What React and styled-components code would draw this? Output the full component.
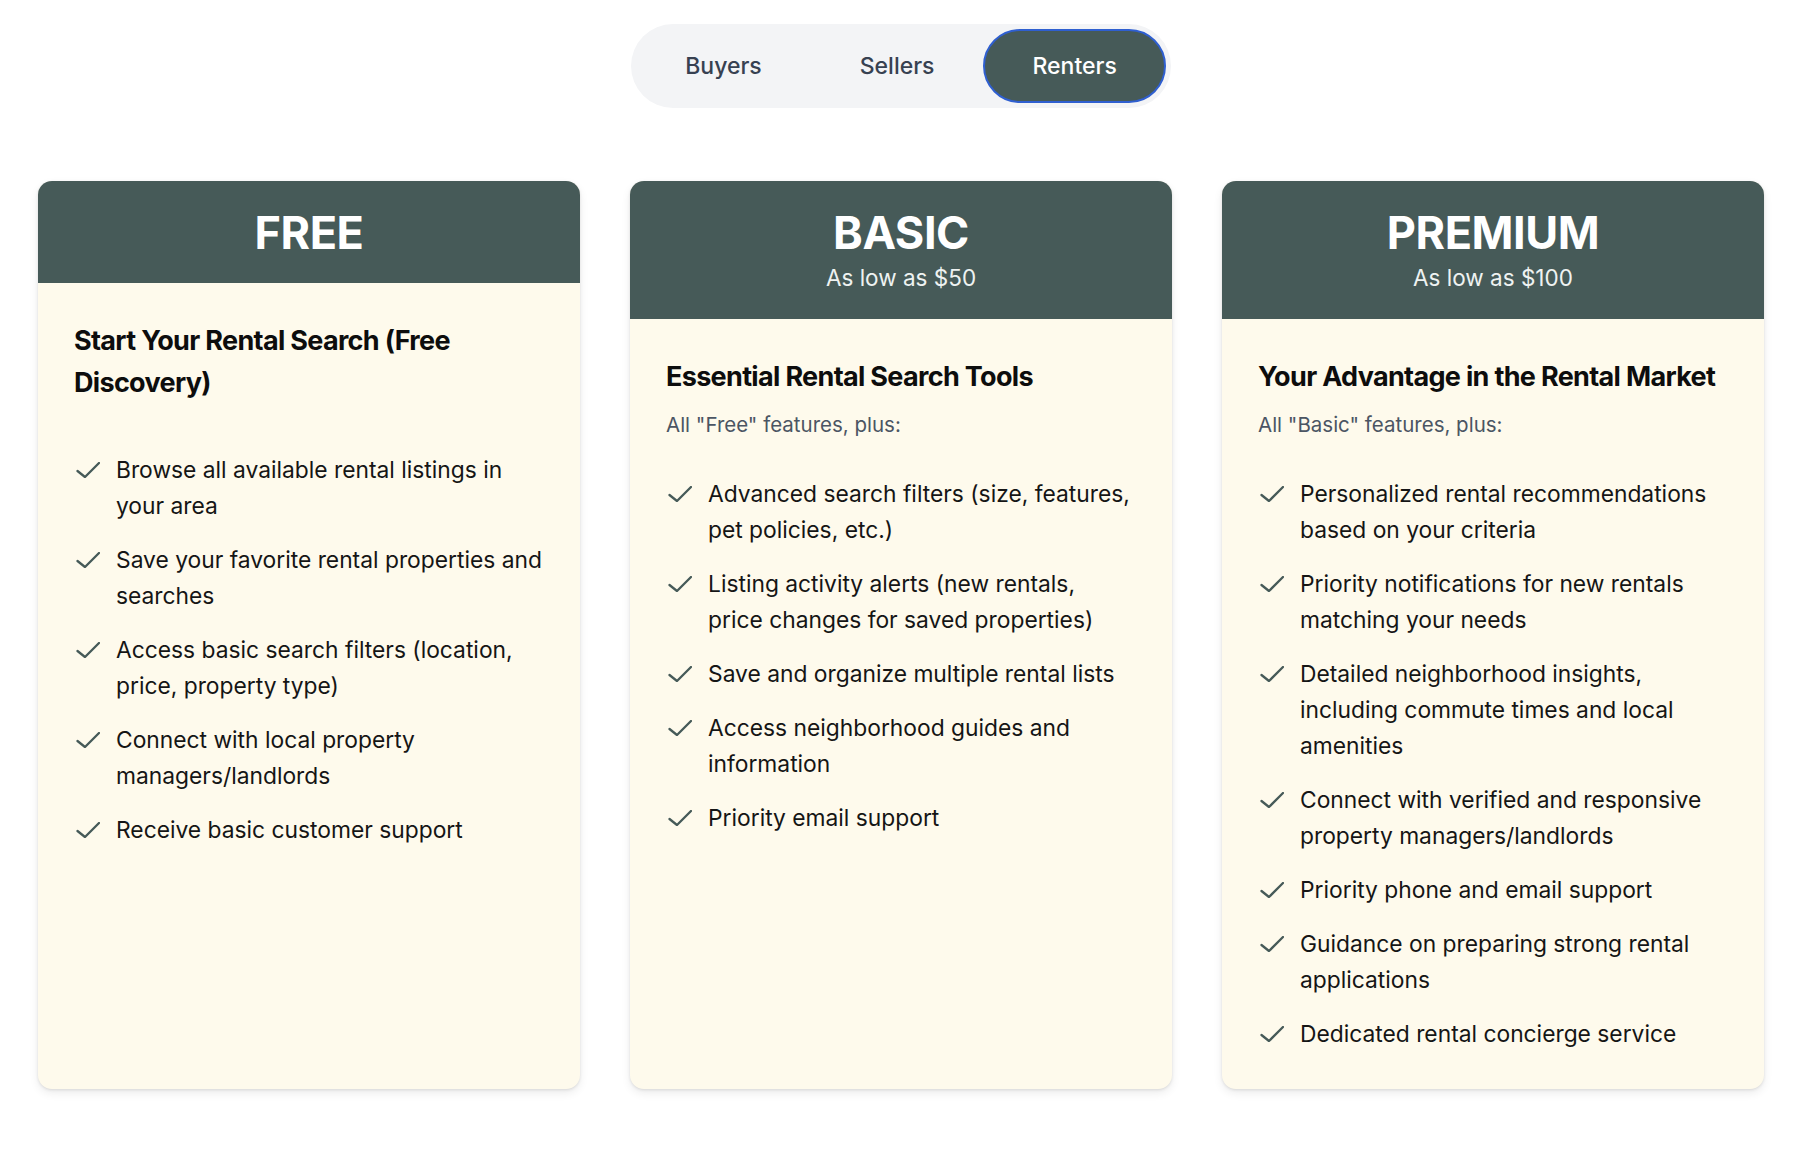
import React from 'react';
import styled, { createGlobalStyle } from 'styled-components';

const GlobalStyle = createGlobalStyle`
  body {
    margin: 0;
    background: #ffffff;
    font-family: Inter, "Noto Sans", sans-serif;
    color: #111111;
  }
`;

const Page = styled.div`
  padding: 24px 56px 60px 38px;
  display: flex;
  flex-direction: column;
  align-items: center;
`;

const Toggle = styled.div`
  display: flex;
  padding: 5px;
  background: #f3f4f6;
  border-radius: 999px;
`;

const ToggleButton = styled.button`
  height: 74px;
  padding: 0 47px;
  border-radius: 999px;
  border: 2px solid ${(p) => (p.$active ? '#2f5fd0' : 'transparent')};
  background: ${(p) => (p.$active ? '#465a58' : 'transparent')};
  color: ${(p) => (p.$active ? '#ffffff' : '#374151')};
  font-family: Inter, sans-serif;
  font-size: 23px;
  font-weight: 500;
  cursor: pointer;
`;

const Grid = styled.div`
  margin-top: 73px;
  display: grid;
  grid-template-columns: repeat(3, 542px);
  gap: 50px;
`;

const Card = styled.div`
  display: flex;
  flex-direction: column;
  border-radius: 14px;
  overflow: hidden;
  background: #fefaec;
  box-shadow: 0 1px 3px rgba(0, 0, 0, 0.1), 0 4px 10px rgba(0, 0, 0, 0.08);
`;

const Header = styled.div`
  background: #465a58;
  color: #ffffff;
  text-align: center;
  padding: 25px 20px 23px;
`;

const PlanName = styled.div`
  font-size: 45px;
  line-height: 54px;
  font-weight: 700;
  letter-spacing: -0.01em;
`;

const Price = styled.div`
  font-size: 22.5px;
  line-height: 36px;
  font-weight: 400;
  color: #eef2f1;
`;

const Body = styled.div`
  flex: 1;
  display: flex;
  flex-direction: column;
  padding: 37px 36px;
`;

const Heading = styled.h3`
  margin: 0 0 12px;
  font-size: 27px;
  line-height: 42px;
  font-weight: 700;
  letter-spacing: -0.025em;
  color: #0d0d0d;
`;

const Note = styled.p`
  margin: 0 0 36px;
  font-size: 20.5px;
  line-height: 30px;
  color: #4b5563;
`;

const List = styled.ul`
  list-style: none;
  margin: 0;
  padding: 0;
  display: flex;
  flex-direction: column;
  gap: 18px;
`;

const Item = styled.li`
  display: flex;
  align-items: flex-start;
  gap: 16px;
  font-size: 22.8px;
  line-height: 36px;
  color: #151515;
`;

const CheckBox = styled.span`
  flex: none;
  width: 26px;
  height: 36px;
  display: flex;
  align-items: center;
  justify-content: flex-end;
`;

function Check() {
  return (
    <CheckBox>
      <svg width="24" height="16" viewBox="0 0 24 16" fill="none">
        <polyline
          points="1.5 9 9 15 23 1"
          stroke="#465a58"
          strokeWidth="2.3"
          strokeLinecap="round"
          strokeLinejoin="round"
        />
      </svg>
    </CheckBox>
  );
}

const plans = [
  {
    name: 'FREE',
    heading: 'Start Your Rental Search (Free Discovery)',
    note: '',
    items: [
      'Browse all available rental listings in your area',
      'Save your favorite rental properties and searches',
      'Access basic search filters (location, price, property type)',
      'Connect with local property managers/landlords',
      'Receive basic customer support',
    ],
  },
  {
    name: 'BASIC',
    price: 'As low as $50',
    heading: 'Essential Rental Search Tools',
    note: 'All "Free" features, plus:',
    items: [
      'Advanced search filters (size, features, pet policies, etc.)',
      'Listing activity alerts (new rentals, price changes for saved properties)',
      'Save and organize multiple rental lists',
      'Access neighborhood guides and information',
      'Priority email support',
    ],
  },
  {
    name: 'PREMIUM',
    price: 'As low as $100',
    heading: 'Your Advantage in the Rental Market',
    note: 'All "Basic" features, plus:',
    items: [
      'Personalized rental recommendations based on your criteria',
      'Priority notifications for new rentals matching your needs',
      'Detailed neighborhood insights, including commute times and local amenities',
      'Connect with verified and responsive property managers/landlords',
      'Priority phone and email support',
      'Guidance on preparing strong rental applications',
      'Dedicated rental concierge service',
    ],
  },
];

export default function App() {
  return (
    <Page>
      <GlobalStyle />
      <Toggle>
        <ToggleButton>Buyers</ToggleButton>
        <ToggleButton>Sellers</ToggleButton>
        <ToggleButton $active>Renters</ToggleButton>
      </Toggle>
      <Grid>
        {plans.map((plan) => (
          <Card key={plan.name}>
            <Header>
              <PlanName>{plan.name}</PlanName>
              {plan.price && <Price>{plan.price}</Price>}
            </Header>
            <Body>
              <Heading>{plan.heading}</Heading>
              <Note>{plan.note}</Note>
              <List>
                {plan.items.map((item) => (
                  <Item key={item}>
                    <Check />
                    <span>{item}</span>
                  </Item>
                ))}
              </List>
            </Body>
          </Card>
        ))}
      </Grid>
    </Page>
  );
}
